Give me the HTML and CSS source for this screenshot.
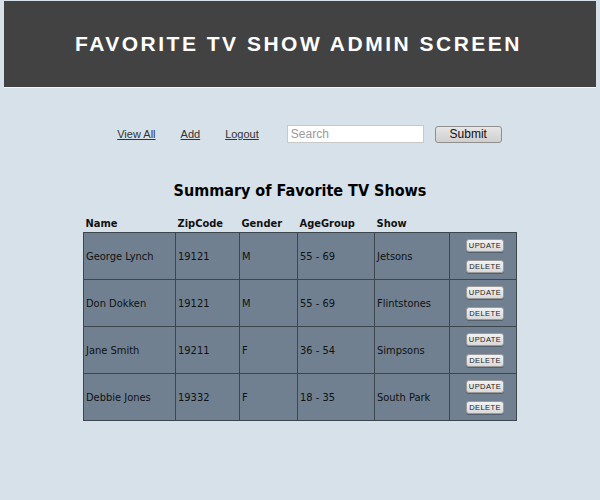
FILE: index.html
```html
<!DOCTYPE html>
<html>
<head>
<meta charset="utf-8">
<title>Favorite TV Show Admin Screen</title>
<link rel="stylesheet" href="styles.css">
</head>
<body>
<header class="banner">
  <h1 class="banner-title">FAVORITE TV SHOW ADMIN SCREEN</h1>
</header>
<nav class="nav">
  <a class="nav-link" href="#">View All</a>
  <a class="nav-link" href="#">Add</a>
  <a class="nav-link" href="#">Logout</a>
  <form class="search">
    <input class="search-input" type="text" placeholder="Search">
    <button class="search-btn" type="button">Submit</button>
  </form>
</nav>
<h2 class="summary-title">Summary of Favorite TV Shows</h2>
<table class="shows">
  <colgroup>
    <col class="c-name"><col class="c-zip"><col class="c-gender"><col class="c-age"><col class="c-show"><col class="c-act">
  </colgroup>
  <thead>
    <tr><th>Name</th><th>ZipCode</th><th>Gender</th><th>AgeGroup</th><th>Show</th><th></th></tr>
  </thead>
  <tbody>
    <tr><td>George Lynch</td><td>19121</td><td>M</td><td>55 - 69</td><td>Jetsons</td>
      <td class="act"><button class="mini-btn">UPDATE</button><button class="mini-btn">DELETE</button></td></tr>
    <tr><td>Don Dokken</td><td>19121</td><td>M</td><td>55 - 69</td><td>Flintstones</td>
      <td class="act"><button class="mini-btn">UPDATE</button><button class="mini-btn">DELETE</button></td></tr>
    <tr><td>Jane Smith</td><td>19211</td><td>F</td><td>36 - 54</td><td>Simpsons</td>
      <td class="act"><button class="mini-btn">UPDATE</button><button class="mini-btn">DELETE</button></td></tr>
    <tr><td>Debbie Jones</td><td>19332</td><td>F</td><td>18 - 35</td><td>South Park</td>
      <td class="act"><button class="mini-btn">UPDATE</button><button class="mini-btn">DELETE</button></td></tr>
  </tbody>
</table>
</body>
</html>
```
FILE: styles.css
```css
html, body {
  margin: 0;
  padding: 0;
  background: #d7e1ea;
}
body {
  padding-top: 1px;
  font-family: "Liberation Sans", Arial, sans-serif;
}
.banner {
  margin: 0 4px;
  height: 86px;
  background: #424242;
  border-bottom: 1px solid #f2f5f8;
  display: flex;
  align-items: center;
  justify-content: center;
}
.banner-title {
  margin: 0;
  color: #ffffff;
  font-family: "Liberation Sans", Arial, sans-serif;
  font-weight: bold;
  font-size: 21px;
  letter-spacing: 2.5px;
  padding-right: 3px;
}
.nav {
  margin-top: 37px;
  display: flex;
  align-items: center;
  justify-content: center;
  padding-left: 19px;
  font-size: 11px;
}
.nav-link {
  color: #333333;
  text-decoration: underline;
  margin-right: 25px;
}
.nav-link:nth-child(3) {
  margin-right: 28px;
}
.search {
  display: flex;
  align-items: center;
  margin: 0;
}
.search-input {
  box-sizing: border-box;
  width: 137px;
  height: 18px;
  margin: 0;
  padding: 1px 3px;
  border: 1px solid #c8c8c8;
  background: #ffffff;
  font-family: "Liberation Sans", Arial, sans-serif;
  font-size: 12px;
  color: #333;
}
.search-input::placeholder {
  color: #9a9a9a;
}
.search-btn {
  box-sizing: border-box;
  margin-left: 11px;
  width: 67px;
  height: 17px;
  padding: 0;
  border: 1px solid #8f8f8f;
  border-radius: 3px;
  background: linear-gradient(#e6e6e6, #cfcfcf);
  font-family: "Liberation Sans", Arial, sans-serif;
  font-size: 12px;
  color: #111;
}
.summary-title {
  margin: 38px 0 0;
  text-align: center;
  font-family: "DejaVu Sans Condensed", "DejaVu Sans", Verdana, sans-serif;
  font-size: 16px;
  font-weight: bold;
  color: #000;
}
.shows {
  margin: 14px auto 0;
  width: 433px;
  border-collapse: collapse;
  table-layout: fixed;
  font-family: "DejaVu Sans Condensed", "DejaVu Sans", Verdana, sans-serif;
  font-size: 11px;
  color: #111;
}
.c-name { width: 92px; }
.c-zip { width: 64px; }
.c-gender { width: 58px; }
.c-age { width: 77px; }
.c-show { width: 75px; }
.c-act { width: 67px; }
.shows th {
  text-align: left;
  font-weight: bold;
  padding: 0 2px;
  height: 18px;
  vertical-align: middle;
}
.shows td {
  background: #708090;
  border: 1px solid #3d454d;
  padding: 0 2px;
  height: 46px;
  vertical-align: middle;
}
.shows td.act {
  text-align: center;
  padding: 0 0 0 4px;
}
.mini-btn {
  display: block;
  box-sizing: border-box;
  width: 38px;
  height: 13px;
  margin: 0 auto;
  padding: 0;
  border: 1px solid #9a9a9a;
  border-radius: 3px;
  background: linear-gradient(#f2f2f2, #dadada);
  box-shadow: 0 1px 0 rgba(0,0,0,0.25);
  font-family: "Liberation Sans", Arial, sans-serif;
  font-size: 7.5px;
  letter-spacing: 0.4px;
  color: #222;
  line-height: 11px;
}
.mini-btn + .mini-btn {
  margin-top: 8px;
}
```
